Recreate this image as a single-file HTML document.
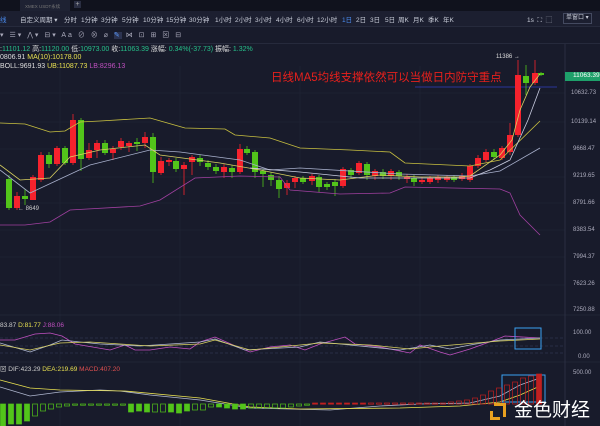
<!DOCTYPE html>
<html><head><meta charset="utf-8"><style>
*{margin:0;padding:0;box-sizing:border-box}
body{width:600px;height:426px;overflow:hidden;background:#181b2b;font-family:"Liberation Sans","Noto Sans CJK SC",sans-serif;position:relative;color:#c8ccd8}
.t{position:absolute;white-space:nowrap;font-size:8px}
.p{position:absolute;top:14px;font-size:6.5px;white-space:nowrap;color:#c8ccd8}
</style></head><body>
<div style="position:absolute;left:0;top:0;width:600px;height:11px;background:#10121d"></div>
<div style="position:absolute;left:20px;top:0;width:50px;height:11px;background:#1e2233"></div>
<div class="t" style="left:25px;top:4px;font-size:4.5px;color:#777">XMEX USDT永续</div>
<div style="position:absolute;left:74px;top:1px;width:7px;height:7px;background:#2a2e42;font-size:7px;color:#aaa;line-height:7px;text-align:center">+</div>
<div style="position:absolute;left:0;top:11px;width:600px;height:16px;background:#1c1f30;border-bottom:1px solid #262a3c"></div>
<div class="p" style="left:0;color:#4a8cf0">线</div>
<div class="p" style="left:20px">自定义周期 ▾</div>
<div class="p" style="left:64px">分时</div><div class="p" style="left:81px">1分钟</div><div class="p" style="left:101px">3分钟</div><div class="p" style="left:122px">5分钟</div><div class="p" style="left:143px">10分钟</div><div class="p" style="left:166px">15分钟</div><div class="p" style="left:189px">30分钟</div><div class="p" style="left:215px">1小时</div><div class="p" style="left:235px">2小时</div><div class="p" style="left:255px">3小时</div><div class="p" style="left:276px">4小时</div><div class="p" style="left:297px">6小时</div><div class="p" style="left:317px">12小时</div><div class="p" style="left:342px;color:#4a8cf0">1日</div><div class="p" style="left:356px">2日</div><div class="p" style="left:370px">3日</div><div class="p" style="left:385px">5日</div><div class="p" style="left:398px">周K</div><div class="p" style="left:413px">月K</div><div class="p" style="left:428px">季K</div><div class="p" style="left:443px">年K</div>
<div class="p" style="left:527px">1s &nbsp;⛶ &nbsp;⬚</div>
<div class="t" style="left:563px;top:13px;border:1px solid #444a60;padding:0 2px;font-size:6px;line-height:9px">单窗口 ▾</div>
<div class="t" style="left:0;top:30px;color:#aab;font-size:7px;letter-spacing:2px">▾ ☰▾ ⋀▾ ⊟▾ Aa ⊘ ⊗ ⌀ <span style="background:#2c3350;color:#5a9aff">✎</span> ⋈ ⊡ ⊞ ⊠ ⊟</div>
<div style="position:absolute;left:0;top:43px;width:600px;height:1px;background:#262a3c"></div>
<div class="t" style="left:0;top:44px;font-size:7px;color:#ddd">:<span style="color:#26c08a">11101.12</span> 高:<span style="color:#26c08a">11120.00</span> 低:<span style="color:#26c08a">10973.00</span> 收:<span style="color:#26c08a">11063.39</span> 涨幅: <span style="color:#26c08a">0.34%(-37.73)</span> 振幅: <span style="color:#26c08a">1.32%</span></div>
<div class="t" style="left:0;top:54px;font-size:7px;color:#ddd">0806.91 <span style="color:#e8e050">MA(10):10178.00</span></div>
<div class="t" style="left:0;top:63px;font-size:7px;color:#ddd">BOLL:9691.93 <span style="color:#e8e050">UB:11087.73</span> <span style="color:#c050c0">LB:8296.13</span></div>
<div class="t" style="left:271px;top:69px;font-size:11.5px;color:#e8201c">日线MA5均线支撑依然可以当做日内防守重点</div>
<svg width="600" height="426" style="position:absolute;left:0;top:0">
<g stroke="#222638" stroke-width="0.6">
<line x1="0" y1="93" x2="565" y2="93"/><line x1="0" y1="122" x2="565" y2="122"/><line x1="0" y1="149" x2="565" y2="149"/><line x1="0" y1="177" x2="565" y2="177"/><line x1="0" y1="203" x2="565" y2="203"/><line x1="0" y1="230" x2="565" y2="230"/><line x1="0" y1="257" x2="565" y2="257"/><line x1="0" y1="285" x2="565" y2="285"/>
<line x1="60" y1="66" x2="60" y2="426"/><line x1="180" y1="66" x2="180" y2="426"/><line x1="300" y1="66" x2="300" y2="426"/><line x1="420" y1="66" x2="420" y2="426"/>
<line x1="0" y1="315" x2="600" y2="315" stroke="#2a2e42"/><line x1="0" y1="362" x2="600" y2="362" stroke="#2a2e42"/>
</g>
<line x1="565" y1="44" x2="565" y2="426" stroke="#2a2e42"/>
<g stroke="#3a4060" stroke-dasharray="3,2" stroke-width="0.6"><line x1="0" y1="338" x2="565" y2="338"/><line x1="0" y1="346" x2="565" y2="346"/><line x1="0" y1="353" x2="565" y2="353"/></g>
<line x1="415" y1="87" x2="557" y2="87" stroke="#3040c0" stroke-width="0.8"/>
<g id="c"></g>
<g fill="none" stroke-width="0.8">
<polyline stroke="#c8c040" points="0,123 25,124 50,132 65,131 80,122 100,121 150,118 185,128 225,129 235,135 270,138 300,148 350,150 390,152 405,163 470,166 500,160 540,121"/>
<polyline stroke="#a040a0" points="0,225 25,225 50,222 70,210 140,206 160,200 195,178 240,176 280,177 290,190 340,194 390,193 405,187 500,189 510,193 520,215 540,235"/>
<polyline stroke="#a8b0cc" points="0,170 30,193 60,179 90,165 150,150 180,152 240,160 270,170 300,168 400,174 470,176 500,171 540,148"/>
<polyline stroke="#d8d060" points="0,165 20,180 50,178 70,157 100,150 145,145 160,155 220,163 260,170 300,178 340,180 380,175 420,177 460,177 470,176 500,155 512,140 520,110 530,87 540,74"/>
<polyline stroke="#c8cce0" points="250,168 300,172 360,178 470,178 490,170 510,160 528,120 540,88"/>
<polyline stroke="#c050c0" points="0,340 15,340 35,334 50,333 62,336 75,344 110,350 125,345 135,350 150,350 170,347 190,349 200,342 215,337 240,348 250,352 270,347 290,345 305,350 320,344 345,337 355,344 380,347 395,350 410,353 420,345 440,352 450,355 470,349 495,340 505,336 540,338"/>
<polyline stroke="#b0b8d0" points="0,343 30,352 50,345 62,340 80,342 100,344 140,346 200,342 215,339 245,350 300,347 320,342 350,345 400,350 430,345 450,349 470,345 500,340 540,338"/>
<polyline stroke="#d8d060" points="0,345 30,350 60,343 90,342 150,346 200,344 215,340 250,350 320,343 370,345 410,349 440,346 500,341 540,339"/>
<polyline stroke="#b0b8d0" points="0,387 30,396 60,392 100,390 120,391 150,395 200,400 250,408 330,410 380,406 420,404 470,403 500,396 520,385 540,378"/>
<polyline stroke="#e8e050" points="0,380 30,388 60,390 125,391 200,398 250,407 300,409 400,408 460,406 500,402 520,395 540,386"/>
</g>
<rect x="515" y="328" width="26" height="21" fill="none" stroke="#3aa0f0" stroke-width="1"/>
<rect x="502" y="375" width="43" height="27" fill="none" stroke="#3aa0f0" stroke-width="1"/>
<g id="m"></g>
<rect x="565" y="72" width="35" height="9" fill="#1ea06a"/>
</svg>
<div class="t" style="left:573px;top:72px;font-size:6.5px;color:#fff">11063.39</div>
<div class="t" style="left:496px;top:54px;font-size:6px;color:#ddd">11386 →</div>
<div class="t" style="left:18px;top:206px;font-size:6px;color:#ccc">← 8649</div>
<div class="t" style="left:571px;top:90px;font-size:6px;color:#aab">10632.73</div>
<div class="t" style="left:571px;top:119px;font-size:6px;color:#aab">10139.14</div>
<div class="t" style="left:573px;top:146px;font-size:6px;color:#aab">9668.47</div>
<div class="t" style="left:573px;top:173px;font-size:6px;color:#aab">9219.65</div>
<div class="t" style="left:573px;top:200px;font-size:6px;color:#aab">8791.66</div>
<div class="t" style="left:573px;top:227px;font-size:6px;color:#aab">8383.54</div>
<div class="t" style="left:573px;top:254px;font-size:6px;color:#aab">7994.37</div>
<div class="t" style="left:573px;top:281px;font-size:6px;color:#aab">7623.26</div>
<div class="t" style="left:573px;top:307px;font-size:6px;color:#aab">7250.88</div>
<div class="t" style="left:573px;top:330px;font-size:6px;color:#aab">100.00</div>
<div class="t" style="left:578px;top:354px;font-size:6px;color:#aab">0.00</div>
<div class="t" style="left:573px;top:370px;font-size:6px;color:#aab">500.00</div>
<div class="t" style="left:0;top:322px;font-size:6.5px;color:#ccc">83.87 <span style="color:#e8e050">D:81.77</span> <span style="color:#c050c0">J:88.06</span></div>
<div class="t" style="left:0;top:363px;font-size:6.5px;color:#ccc">⊠ DIF:423.29 <span style="color:#e8e050">DEA:219.69</span> <span style="color:#e05050">MACD:407.20</span></div>
<div style="position:absolute;left:494px;top:403px;width:12px;height:14px;border:3px solid #e8a020;border-left:none;border-bottom:none"></div>
<div style="position:absolute;left:490px;top:411px;width:10px;height:9px;border:3px solid #e8a020;border-right:none;border-top:none"></div>
<div class="t" style="left:514px;top:401px;font-size:19px;line-height:20px;color:#fff">金色财经</div>
<script>
var C=[[9,1,179,208,175,210],[17,0,196,208,192,210],[25,1,196,199,189,205],[33,0,177,200,175,200],[41,0,155,180,152,182],[49,1,155,164,152,168],[57,0,148,164,146,166],[65,1,148,163,146,165],[73,0,120,163,114,165],[81,1,120,159,118,171],[89,0,150,158,143,160],[97,0,143,150,140,158],[105,1,143,153,140,155],[113,0,149,153,146,160],[121,0,141,147,138,150],[129,0,143,146,141,152],[137,1,142,144,138,151],[145,0,137,143,132,148],[153,1,137,172,133,183],[161,0,161,173,157,175],[169,0,160,162,158,166],[176,1,161,169,158,172],[184,0,165,169,162,195],[192,0,157,162,155,175],[200,1,158,162,155,166],[208,1,163,167,160,170],[216,1,167,171,164,174],[224,0,167,172,164,178],[232,1,168,172,165,178],[240,0,149,172,144,174],[247,1,149,153,146,155],[255,1,152,172,150,178],[263,1,171,174,169,187],[271,1,175,180,172,186],[279,1,180,189,176,198],[287,0,183,188,180,195],[295,0,178,182,176,188],[303,1,178,182,176,184],[312,0,176,181,174,185],[319,1,177,187,175,192],[327,1,184,187,182,190],[335,1,182,186,179,196],[343,0,169,186,167,188],[351,1,170,175,168,178],[359,0,163,173,161,175],[367,1,164,175,162,180],[375,0,171,176,169,180],[383,1,172,176,169,179],[391,0,171,176,169,180],[399,1,172,176,170,180],[407,0,177,179,174,183],[414,1,178,182,175,186],[422,0,180,182,177,184],[430,0,178,182,176,184],[438,0,177,180,175,183],[447,0,177,180,175,182],[454,1,177,180,175,182],[462,0,176,179,173,181],[470,0,166,180,164,182],[478,0,158,166,155,168],[486,0,152,160,149,162],[494,1,152,157,149,160],[502,0,148,158,146,160],[510,0,135,152,123,155],[518,0,75,135,60,137],[526,1,76,83,65,95],[535,0,73,83,60,85],[541,1,73,75,72,76]];
var h='';C.forEach(function(c){var col=c[1]?'#52c41a':'#f5222d';h+='<line x1="'+c[0]+'" y1="'+c[4]+'" x2="'+c[0]+'" y2="'+c[5]+'" stroke="'+col+'" stroke-width="0.8"/><rect x="'+(c[0]-3)+'" y="'+c[2]+'" width="6" height="'+Math.max(1.5,c[3]-c[2])+'" fill="'+col+'"/>';});
document.getElementById('c').innerHTML=h;
var M=[[3,-22,1,1],[11,-20,1,1],[19,-20,1,1],[27,-17,1,1],[35,-12,1,0],[43,-7,1,0],[51,-5,1,0],[59,-3,1,0],[67,-2,0,0],[75,-1,0,0],[83,-1,0,0],[91,-1,0,0],[99,-1,0,0],[107,-1,1,0],[115,-1,1,0],[123,-1,1,0],[131,-8,1,1],[139,-7,1,1],[147,-8,1,1],[155,-8,1,0],[163,-8,1,0],[171,-8,1,1],[179,-9,1,1],[187,-7,1,1],[195,-6,1,0],[203,-6,1,0],[211,-3,1,0],[219,-3,1,1],[227,-4,1,1],[235,-5,1,1],[243,-5,1,1],[251,-4,1,0],[259,-4,1,0],[267,-4,1,0],[275,-4,1,0],[283,-4,1,0],[291,-3,1,0],[299,-2,1,0],[307,-1,1,0],[315,1,0,1],[323,1,0,1],[331,1,0,1],[339,1,0,1],[347,1,0,1],[355,1,0,1],[363,1,0,1],[371,1,0,0],[379,1,1,0],[387,1,1,0],[395,1,1,0],[403,1,1,0],[411,1,1,0],[419,1,1,0],[427,1,1,0],[435,1,1,0],[443,1,1,0],[451,2,0,0],[459,3,0,0],[467,4,0,0],[475,6,0,0],[483,9,0,0],[491,13,0,0],[499,16,0,0],[507,19,0,0],[515,22,0,0],[523,26,0,0],[531,28,0,0],[539,30,0,1]];
var b=404,g='';M.forEach(function(m){var v=m[1],up=v>0,col=up?'#c02020':'#52c41a';var y=up?b-v:b,hh=Math.max(1.2,Math.abs(v));var fill=(m[3]?col:'none');g+='<rect x="'+(m[0]-2.5)+'" y="'+y+'" width="5" height="'+hh+'" fill="'+fill+'" stroke="'+col+'" stroke-width="0.7"/>';});
document.getElementById('m').innerHTML=g;
</script>
</body></html>
